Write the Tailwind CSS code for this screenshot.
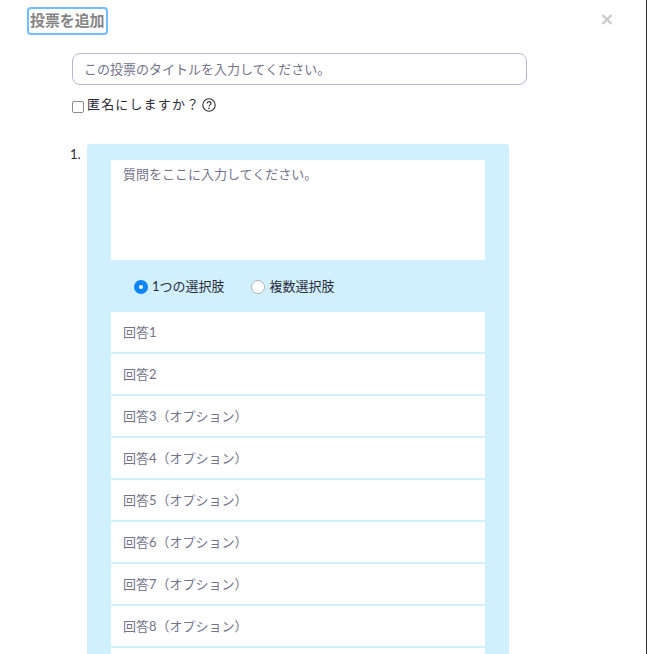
<!doctype html>
<html>
<head>
    <meta charset="UTF-8">
    <script src="https://cdn.jsdelivr.net/npm/@tailwindcss/browser@4"></script>
    <title>投票を追加</title>
</head>
<body class="w-[647px] h-[654px] overflow-hidden bg-white font-['Lato','Noto_Sans_CJK_JP',sans-serif]">
    <div class="h-[654px] overflow-hidden border-r border-[#333] relative">

        <!-- Header -->
        <div class="h-[53px] pl-[29px] pt-[8px]">
            <h4 class="inline-block h-[24px] px-[1px] rounded-[2px] ring-2 ring-[#70bdff] text-[15px] tracking-[-0.1px] leading-[23px] font-bold text-[#858585]">投票を追加</h4>
        </div>
        <button class="absolute left-[600px] top-[12px] w-[14px] h-[14px]">
            <svg viewBox="0 0 14 14" class="w-[14px] h-[14px]"><path d="M2.5 3 L11.5 12 M11.5 3 L2.5 12" stroke="#cbcbcb" stroke-width="2.4"/></svg>
        </button>

        <div class="pl-[72px]">
            <!-- Title -->
            <input type="text" placeholder="この投票のタイトルを入力してください。" class="block w-[455px] h-[32px] pl-[11px] pr-[12px] border border-[#bab6d0] rounded-[8px] text-[13px] outline-none placeholder:text-[#74728a]">

            <!-- Anonymous -->
            <div class="flex items-center h-[20px] mt-[10px] text-[13px] text-[#2d2d39]">
                <input type="checkbox" class="w-[12px] h-[12px] mt-[3px] mr-[3px] appearance-none border border-[#8c8c8c] rounded-[2px] bg-white">
                <span class="tracking-[1.15px]">匿名にしますか？</span>
                <svg viewBox="0 0 14 14" class="w-[14px] h-[14px] ml-[2px]"><circle cx="7" cy="7" r="6.2" fill="none" stroke="#333" stroke-width="1.1"/><path d="M5 5.5 C5 3 9 3 9 5.4 C9 7 7 6.8 7 8.6" fill="none" stroke="#333" stroke-width="1.1"/><circle cx="7" cy="10.4" r="0.8" fill="#333"/></svg>
            </div>

            <!-- Question -->
            <div class="flex mt-[29px]">
                <span class="w-[17px] -ml-[2px] pt-[1px] text-[13px] leading-[18px] text-[#2d2d39]">1.</span>
                <div class="w-[422px] bg-[#d0f0ff] rounded-[3px] px-[24px] pt-[16px] pb-[40px]">
                    <textarea placeholder="質問をここに入力してください。" class="block w-[374px] h-[100px] px-[12px] pt-[5px] pb-[6px] bg-white text-[13px] leading-[18px] outline-none resize-none placeholder:text-[#74728a]"></textarea>

                    <!-- Type -->
                    <div class="flex items-center h-[52px] pt-[2px] pl-[23px] text-[13px] text-[#2d2d39]">
                        <span class="w-[14px] h-[14px] rounded-full bg-[#0e85f5] flex items-center justify-center"><span class="w-[4px] h-[4px] rounded-full bg-white"></span></span>
                        <span class="ml-[4px]">1つの選択肢</span>
                        <span class="w-[14px] h-[14px] ml-[26px] rounded-full bg-white border border-[#b0b0b0]"></span>
                        <span class="ml-[5px]">複数選択肢</span>
                    </div>

                    <!-- Answers -->
                    <div class="flex flex-col gap-[2px]">
                        <input type="text" placeholder="回答1" class="block w-full h-[40px] px-[12px] bg-white text-[13px] outline-none placeholder:text-[#74728a]">
                        <input type="text" placeholder="回答2" class="block w-full h-[40px] px-[12px] bg-white text-[13px] outline-none placeholder:text-[#74728a]">
                        <input type="text" placeholder="回答3（オプション）" class="block w-full h-[40px] px-[12px] bg-white text-[13px] outline-none placeholder:text-[#74728a]">
                        <input type="text" placeholder="回答4（オプション）" class="block w-full h-[40px] px-[12px] bg-white text-[13px] outline-none placeholder:text-[#74728a]">
                        <input type="text" placeholder="回答5（オプション）" class="block w-full h-[40px] px-[12px] bg-white text-[13px] outline-none placeholder:text-[#74728a]">
                        <input type="text" placeholder="回答6（オプション）" class="block w-full h-[40px] px-[12px] bg-white text-[13px] outline-none placeholder:text-[#74728a]">
                        <input type="text" placeholder="回答7（オプション）" class="block w-full h-[40px] px-[12px] bg-white text-[13px] outline-none placeholder:text-[#74728a]">
                        <input type="text" placeholder="回答8（オプション）" class="block w-full h-[40px] px-[12px] bg-white text-[13px] outline-none placeholder:text-[#74728a]">
                        <input type="text" placeholder="回答9（オプション）" class="block w-full h-[40px] px-[12px] bg-white text-[13px] outline-none placeholder:text-[#74728a]">
                    </div>
                </div>
            </div>
        </div>
    </div>
</body>
</html>
